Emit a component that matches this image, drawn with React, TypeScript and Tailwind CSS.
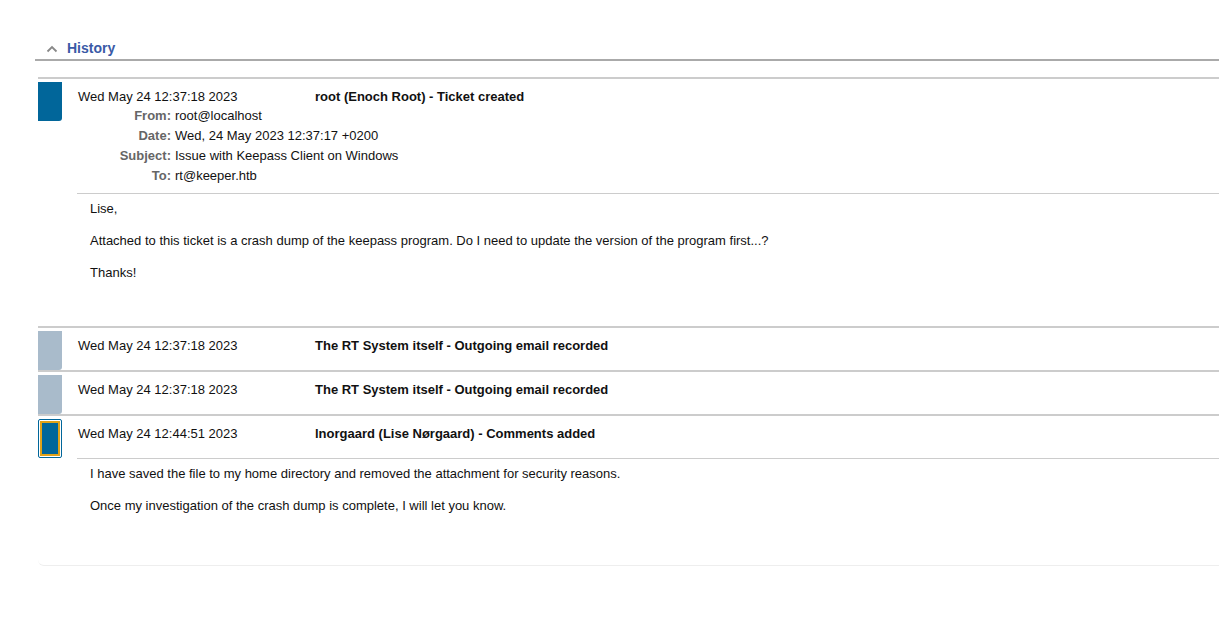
import React from "react";

type Tx = {
  date: string;
  title: string;
  tab: "blue" | "gray" | "selected";
  headers?: [string, string][];
  body?: string[];
  bodyPad?: string;
  sepGap?: string;
};

const txs: Tx[] = [
  {
    date: "Wed May 24 12:37:18 2023",
    title: "root (Enoch Root) - Ticket created",
    tab: "blue",
    headers: [
      ["From:", "root@localhost"],
      ["Date:", "Wed, 24 May 2023 12:37:17 +0200"],
      ["Subject:", "Issue with Keepass Client on Windows"],
      ["To:", "rt@keeper.htb"],
    ],
    body: [
      "Lise,",
      "Attached to this ticket is a crash dump of the keepass program. Do I need to update the version of the program first...?",
      "Thanks!",
    ],
    bodyPad: "pb-[45px]",
    sepGap: "mt-[7px]",
  },
  { date: "Wed May 24 12:37:18 2023", title: "The RT System itself - Outgoing email recorded", tab: "gray" },
  { date: "Wed May 24 12:37:18 2023", title: "The RT System itself - Outgoing email recorded", tab: "gray" },
  {
    date: "Wed May 24 12:44:51 2023",
    title: "lnorgaard (Lise Nørgaard) - Comments added",
    tab: "selected",
    body: [
      "I have saved the file to my home directory and removed the attachment for security reasons.",
      "Once my investigation of the crash dump is complete, I will let you know.",
    ],
    bodyPad: "pb-[51px]",
    sepGap: "mt-[16px]",
  },
];

function Tab({ kind }: { kind: Tx["tab"] }) {
  if (kind === "selected") {
    return (
      <div className="mt-[3px] h-[39px] w-[24px] shrink-0 rounded-[2px] border border-[#01669a] bg-white p-px">
        <div className="h-full w-full border-2 border-[#e0a21a] bg-[#01669a]" />
      </div>
    );
  }
  return (
    <div
      className={
        "mt-[3px] h-[39px] w-[24px] shrink-0 rounded-br-[3px] " +
        (kind === "blue" ? "bg-[#01669a]" : "bg-[#a9bbcb]")
      }
    />
  );
}

function Transaction({ tx, last }: { tx: Tx; last: boolean }) {
  return (
    <div className={"border-t-2 border-[#cccccc] " + (last ? "border-b border-b-[#eeeeee] rounded-bl-[6px]" : "")}>
      <div className="flex">
        <Tab kind={tx.tab} />
        <div className="ml-[15px] min-w-0 flex-1">
          <div className="flex pt-[10px] leading-4">
            <div className="w-[238px] shrink-0 pl-px">{tx.date}</div>
            <div className="font-bold">{tx.title}</div>
          </div>
          {tx.headers && (
            <div className="mt-px">
              {tx.headers.map(([k, v]) => (
                <div key={k} className="flex h-5 items-center">
                  <div className="w-[94px] shrink-0 text-right font-bold text-[#666666]">{k}</div>
                  <div className="pl-[4px]">{v}</div>
                </div>
              ))}
            </div>
          )}
          {tx.body && (
            <div className={(tx.sepGap ?? "") + " border-t border-[#cccccc] pt-[7px] pl-[13px] " + (tx.bodyPad ?? "")}>
              {tx.body.map((p, i) => (
                <p key={i} className={"leading-4 " + (i > 0 ? "mt-4" : "")}>
                  {p}
                </p>
              ))}
            </div>
          )}
        </div>
      </div>
    </div>
  );
}

export default function App() {
  return (
    <div className="min-h-[628px] bg-white pt-[38px] pl-[35px] text-[13px] text-[#111111]" style={{ fontFamily: '"Liberation Sans", Arial, sans-serif' }}>
      <div className="flex h-[20px] items-center border-b-2 border-[#aaaaaa] box-content pb-px">
        <svg width="12" height="8" viewBox="0 0 12 8" className="ml-[11px] mt-px">
          <polyline points="1.5,6.5 6,2 10.5,6.5" fill="none" stroke="#888888" strokeWidth="1.8" />
        </svg>
        <span className="ml-[9px] text-[14px] font-bold text-[#3a5aa6]">History</span>
      </div>
      <div className="mt-[16px] pl-[3px]">
        {txs.map((tx, i) => (
          <Transaction key={i} tx={tx} last={i === txs.length - 1} />
        ))}
      </div>
    </div>
  );
}
